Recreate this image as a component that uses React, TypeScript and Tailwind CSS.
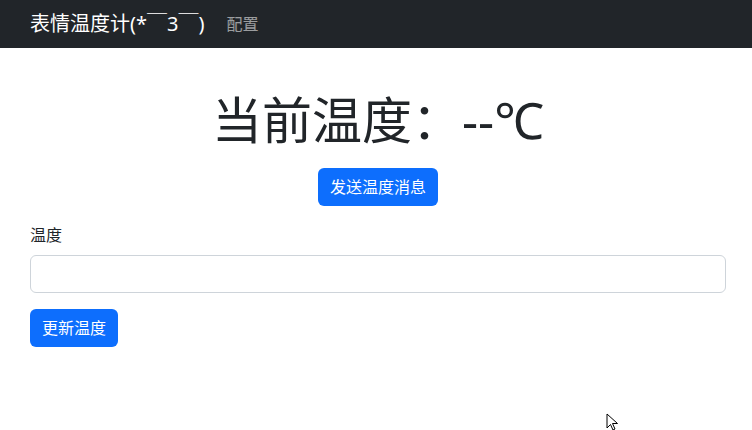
import React from 'react';

const font = { fontFamily: '"Noto Sans", "Noto Sans CJK SC", sans-serif' };

export default function App() {
  return (
    <div className="relative min-h-[430px] bg-white text-[#212529]" style={font}>
      {/* Navbar */}
      <nav className="h-12 bg-[#212529] flex items-center px-[30px]">
        <span className="text-white text-[20px] leading-none">表情温度计(*￣3￣)</span>
        <span className="ml-[22px] text-[16px] text-white/55">配置</span>
      </nav>

      <main className="pl-[30px] pr-[26px]">
        <h1 className="mt-[42px] text-center text-[50px] leading-[1.2] font-normal">当前温度：--℃</h1>
        <div className="flex justify-center mt-[18px]">
          <button className="h-[38px] px-3 rounded-md bg-[#0d6efd] text-white text-[16px]">发送温度消息</button>
        </div>

        <div className="mt-[17px]">
          <label className="block text-[16px] leading-6 mb-2">温度</label>
          <input className="block w-full h-[38px] border border-[#ced4da] rounded-md px-3 outline-none" />
        </div>
        <button className="mt-4 h-[38px] px-3 rounded-md bg-[#0d6efd] text-white text-[16px]">更新温度</button>
      </main>

      {/* Mouse pointer */}
      <svg className="absolute left-[606px] top-[413px]" width="14" height="18" viewBox="0 0 14 18">
        <path d="M1 1 L1 15 L4.5 11.5 L7 17 L9 16 L6.5 10.5 L11.5 10.5 Z" fill="white" stroke="black" strokeWidth="1" />
      </svg>
    </div>
  );
}
